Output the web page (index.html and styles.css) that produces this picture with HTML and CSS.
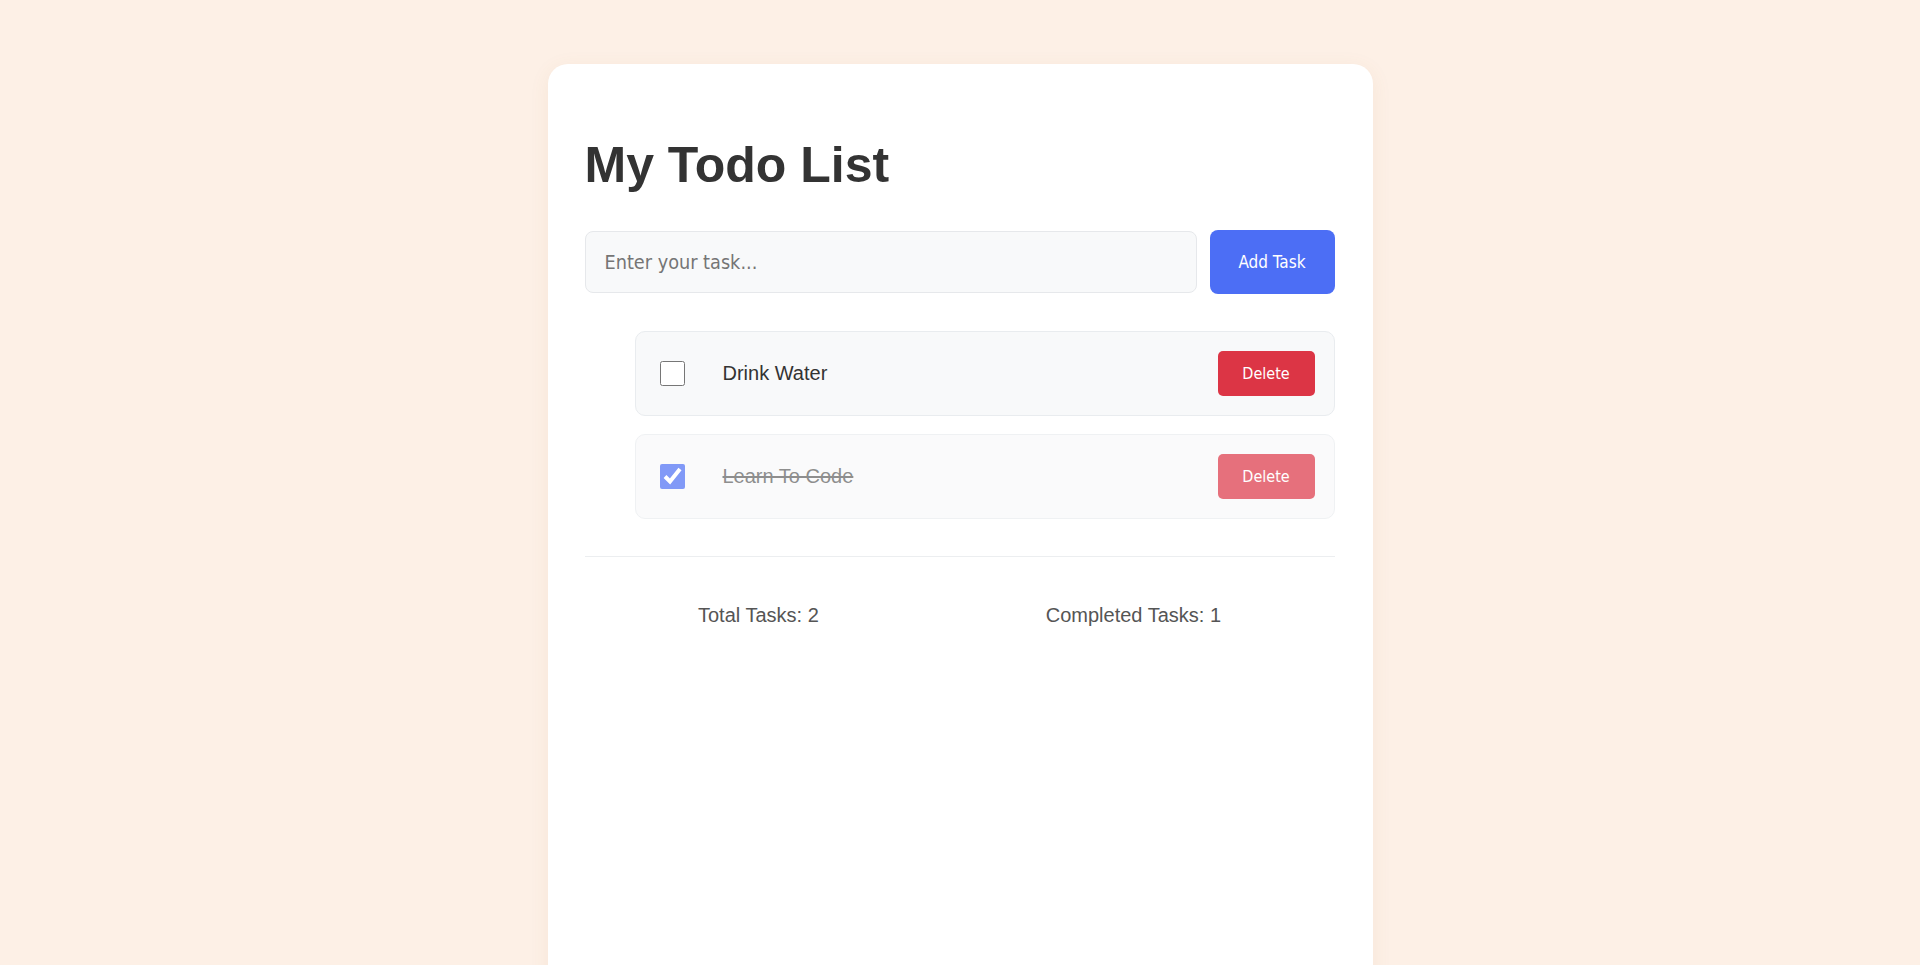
FILE: index.html
```html
<!DOCTYPE html>
<html lang="en">
<head>
<meta charset="utf-8">
<title>My Todo List</title>
<link rel="stylesheet" href="styles.css">
</head>
<body>
<main class="card">
  <h1 class="title">My Todo List</h1>
  <form class="add-row">
    <input class="task-input" type="text" placeholder="Enter your task...">
    <button class="add-btn" type="button">Add Task</button>
  </form>
  <ul class="task-list">
    <li class="task">
      <input class="task-check" type="checkbox">
      <span class="task-text">Drink Water</span>
      <button class="delete-btn" type="button">Delete</button>
    </li>
    <li class="task done">
      <input class="task-check" type="checkbox" checked>
      <span class="task-text">Learn To Code</span>
      <button class="delete-btn" type="button">Delete</button>
    </li>
  </ul>
  <div class="stats">
    <span class="stat">Total Tasks: 2</span>
    <span class="stat">Completed Tasks: 1</span>
  </div>
</main>
</body>
</html>
```

FILE: styles.css
```css
* { box-sizing: border-box; }

html, body {
  margin: 0;
  padding: 0;
  background: #fdf0e6;
  font-family: "Liberation Sans", Arial, sans-serif;
  color: #333;
}

body {
  overflow: hidden;
  height: 965px;
}

.card {
  width: 825px;
  min-height: 1000px;
  margin: 64px auto 0;
  padding: 74px 38px 40px 37px;
  background: #ffffff;
  border-radius: 20px;
  box-shadow: 0 4px 20px rgba(160, 110, 70, 0.08);
}

.title {
  margin: 0 0 37px;
  font-size: 50px;
  line-height: 55px;
  font-weight: 700;
  color: #333;
}

.add-row {
  display: flex;
  align-items: center;
  gap: 13px;
  margin: 0;
}

.task-input {
  flex: 1;
  height: 62px;
  padding: 0 19px;
  background: #f8f9fa;
  border: 1px solid #e6e8eb;
  border-radius: 8px;
  font-family: "DejaVu Sans", Tahoma, sans-serif;
  font-stretch: condensed;
  font-size: 19.7px;
  color: #333;
  outline: none;
}

.task-input::placeholder {
  color: #757575;
}

.add-btn {
  width: 125px;
  height: 64px;
  border: none;
  border-radius: 8px;
  background: #4c6ef5;
  color: #fff;
  font-family: "DejaVu Sans", Tahoma, sans-serif;
  font-stretch: condensed;
  font-size: 17px;
  cursor: pointer;
}

.task-list {
  list-style: none;
  margin: 37px 0 0;
  padding: 0 0 0 50px;
  display: flex;
  flex-direction: column;
  gap: 18px;
}

.task {
  display: flex;
  align-items: center;
  height: 85px;
  padding: 0 19px 0 24px;
  background: #f8f9fa;
  border: 1px solid #e9ecef;
  border-radius: 10px;
}

.task-check {
  width: 25px;
  height: 25px;
  margin: 0 38px 0 0;
  accent-color: #4c6ef5;
}

.task-text {
  font-size: 20px;
  color: #333;
}

.delete-btn {
  margin-left: auto;
  width: 97px;
  height: 45px;
  border: none;
  border-radius: 5px;
  background: #dc3545;
  color: #fff;
  font-family: "DejaVu Sans", Tahoma, sans-serif;
  font-stretch: condensed;
  font-size: 16px;
  cursor: pointer;
}

.task.done {
  opacity: 0.7;
}

.task.done .task-text {
  text-decoration: line-through;
  color: #5f5f5f;
}

.stats {
  display: flex;
  justify-content: space-around;
  margin-top: 37px;
  padding-top: 47px;
  border-top: 1px solid #eceef0;
}

.stat {
  font-size: 20px;
  line-height: 23px;
  color: #555;
}
```
